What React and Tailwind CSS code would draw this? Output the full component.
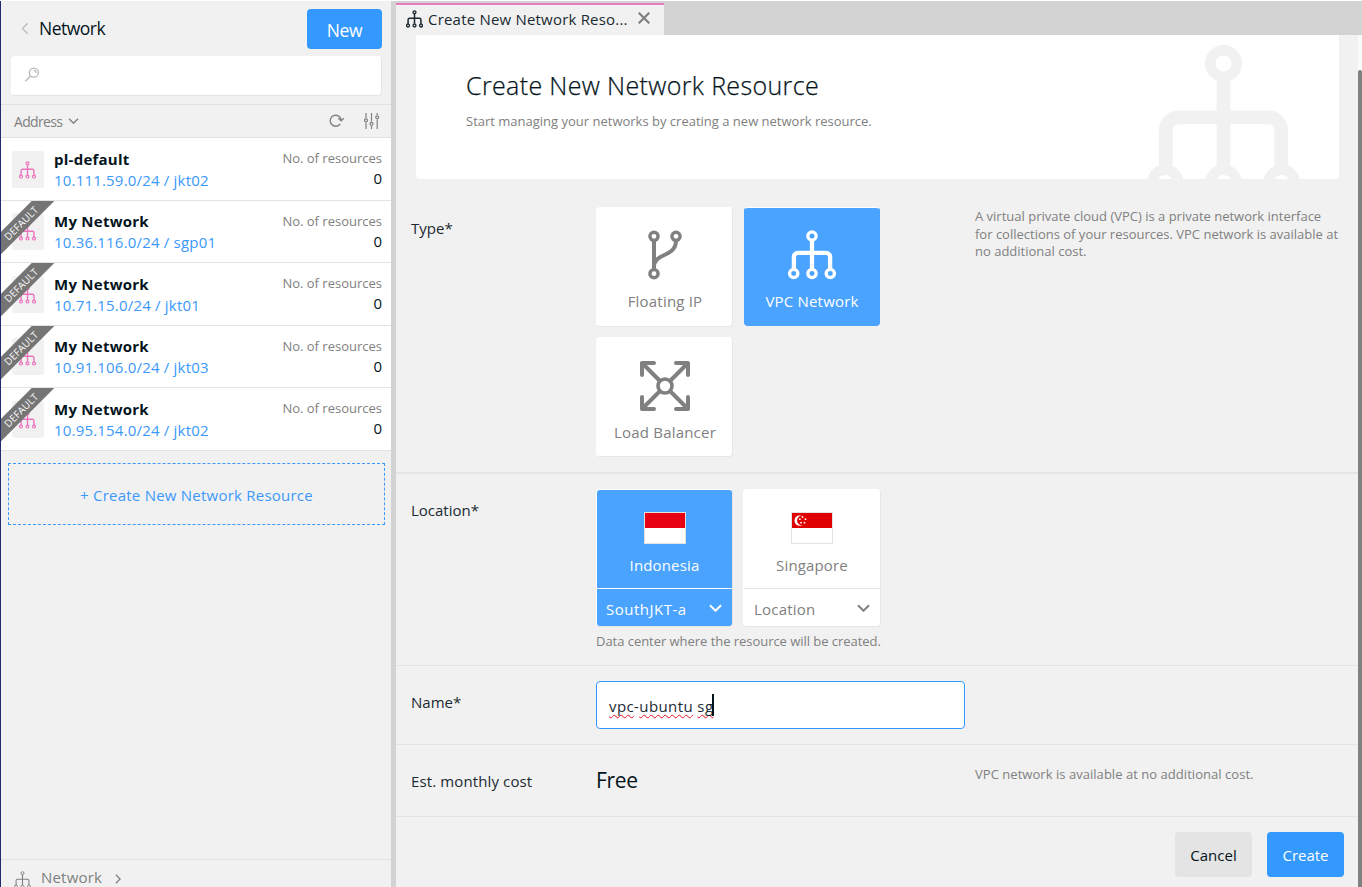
import React from "react";

function Tree({ className, ring = 3.3, line = 4.3 }) {
  return (
    <svg viewBox="0 0 48 50" fill="none" stroke="currentColor" className={className}>
      <g strokeWidth={ring}>
        <circle cx="24" cy="6" r="4.15" />
        <circle cx="5.7" cy="43.5" r="4.15" />
        <circle cx="24" cy="43.5" r="4.15" />
        <circle cx="42.3" cy="43.5" r="4.15" />
      </g>
      <path
        strokeWidth={line}
        d="M24 10.5V39M5.9 39V26.9a4 4 0 0 1 4-4h28.2a4 4 0 0 1 4 4V39"
      />
    </svg>
  );
}

function Branch() {
  return (
    <svg viewBox="0 0 36 50" fill="none" stroke="currentColor" className="h-[50px] w-9">
      <g strokeWidth="3.4">
        <circle cx="7" cy="6.3" r="4.1" />
        <circle cx="29" cy="6.3" r="4.1" />
        <circle cx="7" cy="43.7" r="4.1" />
      </g>
      <path strokeWidth="4" d="M7 10.5V39.5M7 37C7 22 29 28 29 10.5" />
    </svg>
  );
}

function Balancer() {
  return (
    <svg
      viewBox="0 0 50 50"
      fill="none"
      stroke="currentColor"
      strokeWidth="4"
      strokeLinecap="round"
      strokeLinejoin="round"
      className="size-[50px]"
    >
      <circle cx="25" cy="25" r="7" strokeWidth="3.6" />
      <path d="M3 3l16.5 16.5M47 3L30.500 19.500M3 47l16.500-16.500M47 47L30.500 30.500M2 14V2h12M36 2h12v12M2 36v12h12M48 36v12H36" />
    </svg>
  );
}

function Chevron({ className, width = 1.5 }) {
  return (
    <svg viewBox="0 0 14 8" fill="none" stroke="currentColor" strokeWidth={width} className={className}>
      <path d="M1 1l6 6 6-6" />
    </svg>
  );
}

const networks = [
  { name: "pl-default", address: "10.111.59.0/24 / jkt02", isDefault: false },
  { name: "My Network", address: "10.36.116.0/24 / sgp01", isDefault: true },
  { name: "My Network", address: "10.71.15.0/24 / jkt01", isDefault: true },
  { name: "My Network", address: "10.91.106.0/24 / jkt03", isDefault: true },
  { name: "My Network", address: "10.95.154.0/24 / jkt02", isDefault: true },
];

function NetworkRow({ name, address, isDefault }) {
  return (
    <li className="relative flex h-[62.5px] overflow-hidden border-b border-[#e2e2e2] bg-white pt-[10.5px] pr-[9px] pl-[11px]">
      <div className="mt-0.5 flex h-[37px] w-8 shrink-0 items-center justify-center rounded-[3px] bg-[#f1f1f1] pr-0.5 text-[#ec72bd]">
        <Tree className="mt-px h-[18px] w-[17px]" ring={3.4} line={3.8} />
      </div>
      <div className="ml-2.5 flex-1 whitespace-nowrap">
        <div className="text-[15px] leading-[21px] font-bold tracking-[0.25px] text-[#04141c]">{name}</div>
        <div className="text-[15px] leading-[21px] tracking-[0.19px] text-[#3b99fc]">{address}</div>
      </div>
      <div className="pt-[0.5px] text-right whitespace-nowrap">
        <div className="text-[13px] leading-[19px] text-[#808080]">No. of resources</div>
        <div className="text-[15px] leading-[20px] text-[#04141c]">0</div>
      </div>
      {isDefault && (
        <div className="absolute top-[14px] left-[-25px] flex h-4 w-[90px] -rotate-45 items-center justify-center bg-[#757575] text-[10px] leading-none tracking-[0.1px] text-white">
          DEFAULT
        </div>
      )}
    </li>
  );
}

function Sidebar() {
  return (
    <aside className="flex w-[391px] shrink-0 flex-col border-l border-[#1f2c6d] bg-[#f1f1f1]">
      <header className="flex h-[55px] shrink-0 items-start pr-[9px] pl-[18px]">
        <Chevron className="mt-6 h-[7px] w-3 rotate-90 text-[#c2c2c2]" width={1.8} />
        <h1 className="mt-[14px] ml-2 flex-1 text-[17.5px] leading-[26px] tracking-[-0.5px] text-[#04141c]">Network</h1>
        <button className="mt-2 h-10 w-[75px] rounded bg-[#3399ff] pt-0.5 text-[17.5px] leading-[26px] tracking-[-0.3px] text-white">New</button>
      </header>
      <div className="mr-[9px] ml-2.5 flex h-10 shrink-0 items-start rounded border border-white border-r-[#e4e4e4] border-b-[#e4e4e4] bg-white pt-2.5 pl-3">
        <svg viewBox="0 0 16 16" fill="none" stroke="#b8b8b8" strokeWidth="1.3" className="size-4">
          <circle cx="9.800" cy="5.700" r="4.500" />
          <path d="M6.500 9L1.300 14.300M9.800 3.300a2.500 2.500 0 0 1 2.300 2.700" />
        </svg>
      </div>
      <div className="mt-2 flex h-[34px] shrink-0 items-center border-y border-[#e2e2e2] pr-[11px] pl-[13px] text-[#808080]">
        <span className="mt-0.5 text-[14px] leading-5 tracking-[-0.65px]">Address</span>
        <Chevron className="mb-px ml-1.5 h-1.5 w-[11px]" width={1.8} />
        <svg viewBox="0 0 16 14" fill="none" stroke="currentColor" strokeWidth="1.400" className="mb-0.5 ml-auto h-3.5 w-4">
          <path d="M11.300 10.800A5.500 5.500 0 1 1 12.200 7M9.300 5.300l2.900 2.600 2.600-2.600" />
        </svg>
        <svg viewBox="0 0 16 16" fill="none" stroke="currentColor" strokeWidth="1.200" className="mb-px ml-[19px] size-4">
          <path d="M2 0v5M2 9.500V16M7.500 0v8.500M7.500 13v3M13.200 0v2M13.200 6.500V16" />
          <circle cx="2" cy="7.300" r="1.500" />
          <circle cx="7.500" cy="10.800" r="1.500" />
          <circle cx="13.200" cy="4.300" r="1.500" />
        </svg>
      </div>
      <ul>
        {networks.map((n) => (
          <NetworkRow key={n.address} {...n} />
        ))}
      </ul>
      <button className="mt-3 mr-1.5 ml-[7px] h-[62px] shrink-0 border border-dashed border-[#3b99fc] pt-0.5 text-[15px] leading-5 tracking-[0.23px] text-[#3b99fc]">
        + Create New Network Resource
      </button>
      <footer className="mt-auto flex h-7 shrink-0 items-start overflow-hidden border-t border-[#e2e2e2] pl-[13px] text-[#808080]">
        <Tree className="mt-[11px] h-[18px] w-[17px] shrink-0" ring={2.8} line={3} />
        <span className="mt-[7px] ml-2.5 text-[15px] leading-[21px] tracking-[0.2px]">Network</span>
        <Chevron className="mt-4 ml-[11px] h-1.5 w-2.5 -rotate-90" width={1.8} />
      </footer>
    </aside>
  );
}

function TypeCard({ label, active, className = "pt-[22px]", children }) {
  return (
    <button
      className={
        "flex flex-col items-center rounded border " +
        className +
        (active
          ? " ml-px h-[119px] w-[136px] border-[#4aa3ff] border-t-white bg-[#4aa3ff] text-white"
          : " h-[120px] w-[137px] border-white border-r-[#e6e6e6] border-b-[#e6e6e6] bg-white pl-px text-[#808080]")
      }
    >
      <span className="flex h-[50px] items-center">{children}</span>
      <span className="mt-2.5 text-[15px] leading-[22px] tracking-[0.2px]">{label}</span>
    </button>
  );
}

function LocationCard({ label, zone, active, children }) {
  return (
    <div
      className={
        "flex flex-col rounded border " +
        (active
          ? "w-[137px] border-white border-r-[#e6e6e6] border-b-[#e6e6e6] bg-[#4aa3ff] text-white"
          : "w-[138px] border-white border-r-[#e6e6e6] border-b-[#e6e6e6] bg-white text-[#808080]")
      }
    >
      <div className="flex h-[98px] flex-col items-center pt-[22px]">
        {children}
        <span className="mt-2.5 text-[15px] leading-[22px] tracking-[0.15px]">{label}</span>
      </div>
      <div
        className={
          "flex h-[38px] items-center justify-between border-t pt-0.5 pr-2.5 " +
          (active ? "border-white pl-[9px]" : "border-[#e2e2e2] pl-2.5")
        }
      >
        <span className={"text-[15px] leading-5 " + (active ? "tracking-[0.5px]" : "tracking-[0.2px]")}>{zone}</span>
        <Chevron className="mb-0.5 h-2 w-[13px]" width={2.1} />
      </div>
    </div>
  );
}

function Flag({ red, children }) {
  return (
    <svg viewBox="0 0 42 32" className="h-8 w-[42px]">
      <rect x=".5" y=".5" width="41" height="31" fill="#fff" stroke="#e2e2e2" />
      <rect x="1" y="1" width="40" height="15" fill={red} />
      {children}
    </svg>
  );
}

function Field({ label, className, labelClass, children }) {
  return (
    <section className={"flex border-[#e4e4e4] pl-[15px] " + className}>
      <div className={"w-[185px] shrink-0 text-[15px] leading-[22px] text-[#1b2a31] " + labelClass}>{label}</div>
      {children}
    </section>
  );
}

const squiggle = "underline decoration-[#e81123] decoration-wavy decoration-[1px] underline-offset-[2px] [text-decoration-skip-ink:none]";

function Main() {
  return (
    <main className="flex min-w-0 flex-1 flex-col bg-[#f1f1f1]">
      <div className="flex h-[34px] shrink-0 bg-[#d3d3d3] pt-0.5">
        <div className="flex w-[268px] items-center border-t-2 border-[#e879bd] bg-[#f1f1f1] pb-0.5 pl-2.5 text-[#1b2a31]">
          <Tree className="h-[18px] w-[17px] shrink-0" ring={3.8} line={4.3} />
          <span className="ml-[5px] w-[201px] text-[15px] leading-5 tracking-[0.2px] whitespace-nowrap">Create New Network Reso...</span>
          <svg viewBox="0 0 12 12" stroke="#808080" strokeWidth="2.2" className="mb-0.5 ml-[9px] size-3">
            <path d="M.7.7l10.600 10.600M11.300.7L.7 11.300" />
          </svg>
        </div>
      </div>
      <div className="flex min-h-0 flex-1">
        <div className="flex flex-1 flex-col">
          <div className="mr-[19px] ml-5 flex h-36 shrink-0 items-start justify-between overflow-hidden rounded-b bg-white pt-[9px] pr-[39px] pl-[50px]">
            <div>
              <h2 className="mt-[23px] text-[25px] leading-9 font-light tracking-[0.36px] whitespace-nowrap text-[#04141c] [-webkit-text-stroke:0.25px_#04141c]">
                Create New Network Resource
              </h2>
              <p className="mt-2 text-[13px] leading-5 whitespace-nowrap text-[#808080]">
                Start managing your networks by creating a new network resource.
              </p>
            </div>
            <Tree className="h-40 w-[153px] shrink-0 text-[#f1f1f1]" />
          </div>

          <Field label="Type*" labelClass="pt-2.5" className="h-[295px] shrink-0 border-b-2 pt-7">
            <div className="grid h-fit w-[285px] grid-cols-[137px_137px] gap-2.5">
              <TypeCard label="Floating IP">
                <Branch />
              </TypeCard>
              <TypeCard label="VPC Network" active>
                <Tree className="h-[50px] w-12" />
              </TypeCard>
              <TypeCard label="Load Balancer" className="pt-[23px]">
                <Balancer />
              </TypeCard>
            </div>
            <p className="mt-px ml-[94px] text-[13px] leading-[17.500px] whitespace-nowrap text-[#808080]">
              A virtual private cloud (VPC) is a private network interface
              <br />
              for collections of your resources. VPC network is available at
              <br />
              no additional cost.
            </p>
          </Field>

          <Field label="Location*" labelClass="pt-2.5" className="h-48 shrink-0 border-b pt-[15px]">
            <div>
              <div className="flex gap-2.5">
                <LocationCard label="Indonesia" zone="SouthJKT-a" active>
                  <Flag red="#e70011" />
                </LocationCard>
                <LocationCard label="Singapore" zone="Location">
                  <Flag red="#df0000">
                    <circle cx="8.800" cy="8.500" r="5.300" fill="#fff" />
                    <circle cx="11" cy="8.500" r="4.900" fill="#df0000" />
                    <g fill="#fff">
                      <circle cx="11.500" cy="5" r=".9" />
                      <circle cx="8.900" cy="7.200" r=".9" />
                      <circle cx="14.500" cy="7.200" r=".9" />
                      <circle cx="10" cy="10.700" r=".9" />
                      <circle cx="13.500" cy="10.700" r=".9" />
                    </g>
                  </Flag>
                </LocationCard>
              </div>
              <p className="mt-1 text-[13px] leading-5 tracking-[-0.04px] whitespace-nowrap text-[#808080]">
                Data center where the resource will be created.
              </p>
            </div>
          </Field>

          <Field label="Name*" labelClass="pt-2.5" className="h-[79px] shrink-0 border-b pt-[15px]">
            <div className="flex h-12 w-[369px] items-center rounded-sm border border-[#3399ff] bg-white pl-3 text-[15px] leading-5 tracking-[0.4px] text-[#1b2a31]">
              <span className="mt-0.5 whitespace-nowrap">
                <span className={squiggle}>vpc</span>-<span className={squiggle}>ubuntu</span>{" "}
                <span className={squiggle}>sg</span>
              </span>
              <span className="-ml-px h-[22px] w-0.5 bg-[#04141c]" />
            </div>
          </Field>

          <Field label="Est. monthly cost" labelClass="pt-[25px] tracking-[0.12px]" className="h-[72px] shrink-0 border-b">
            <div className="w-[379px] pt-5 text-[21px] leading-[30px] tracking-[-0.3px] text-[#04141c]">Free</div>
            <p className="pt-[19px] text-[13px] leading-5 tracking-[0.04px] whitespace-nowrap text-[#808080]">
              VPC network is available at no additional cost.
            </p>
          </Field>

          <div className="flex justify-end gap-[15px] pt-[15px] pr-3.5 text-[15px] leading-5">
            <button className="h-[45px] w-[77px] rounded bg-[#e4e4e4] text-[#04141c]">Cancel</button>
            <button className="h-[45px] w-[77px] rounded bg-[#3399ff] text-white">Create</button>
          </div>
        </div>
        <div className="w-1 shrink-0 bg-[#fafafa] pt-[35px]">
          <div className="h-full rounded-t-sm bg-[#808080]" />
        </div>
      </div>
    </main>
  );
}

export default function App() {
  return (
    <div className="flex h-[887px] w-[1362px] overflow-hidden border-t border-white bg-[#f1f1f1] font-['Open_Sans','Noto_Sans',sans-serif]">
      <Sidebar />
      <div className="w-[5px] shrink-0 bg-[#d3d3d3]" />
      <Main />
    </div>
  );
}
